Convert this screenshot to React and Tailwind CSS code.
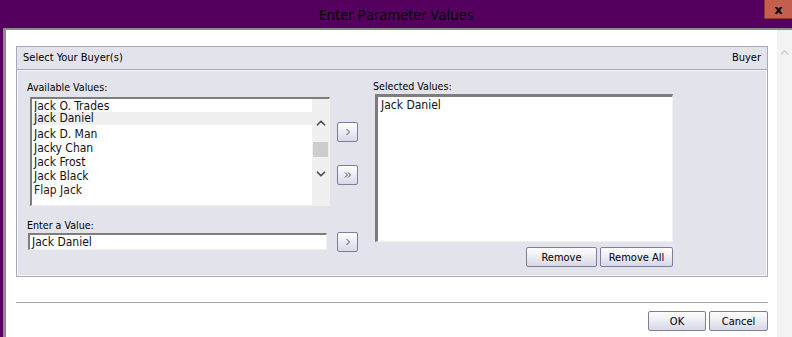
import {ChevronUp, ChevronDown} from "lucide-react";

const available = ["Jack O. Trades", "Jack Daniel", "Jack D. Man", "Jacky Chan", "Jack Frost", "Jack Black", "Flap Jack"];

function WinButton({ children, className = "" }) {
    return <button className={"flex items-center justify-center rounded-[2px] border border-[#7f7d9e] bg-gradient-to-b from-white to-[#d8d8e6] text-[11px] text-black leading-none " + className}>
        {children}
    </button>
}

function Arrow({ double }) {
    return <svg width="8" height="8" viewBox="0 0 8 8" fill="none" stroke="#4a4a66" strokeWidth="1">
        {double ? <>
            <path d="M1 1.5 L3.5 4 L1 6.5" />
            <path d="M4 1.5 L6.5 4 L4 6.5" />
        </> : <path d="M2.5 1 L5.5 4 L2.5 7" />}
    </svg>
}

// list row heights follow the uneven spacing in the original control
const rowClass = [
    "h-[11px] leading-[11px]",
    "h-[13px] leading-[13px] bg-[#efefef] mb-[2px]",
    "h-[14px] leading-[14px]",
    "h-[14px] leading-[14px]",
    "h-[14px] leading-[14px]",
    "h-[14px] leading-[14px]",
    "h-[14px] leading-[14px] text-[#3a1010]",
];

export default function App() {
    return <div className="w-[792px] h-[337px] overflow-hidden bg-[#55005e] flex flex-col" style={{fontFamily: '"DejaVu Sans Condensed", "DejaVu Sans", sans-serif'}}>
        {/* title bar */}
        <div className="h-[28px] shrink-0 relative flex items-center justify-center">
            <span className="text-[14px] text-black" style={{fontFamily: '"Noto Sans", sans-serif'}}>Enter Parameter Values</span>
            <div className="absolute right-0 top-0 w-[28px] h-[19px] bg-[#c45f50] border border-[#8a3a30] border-t-0 border-r-0 flex items-center justify-center">
                <span className="text-[13px] font-bold text-black leading-none" style={{fontFamily: '"DejaVu Sans", sans-serif'}}>x</span>
            </div>
        </div>

        <div className="flex-1 flex min-h-0">
            <div className="w-[3px] shrink-0" />
            <div className="flex-1 flex bg-white border-l-[3px] border-t-[2px] border-[#8c8c8c] min-w-0">
                <div className="flex-1 flex flex-col pl-[10px] pr-[9px] pt-[16px]">
                    {/* parameter panel */}
                    <div className="border border-[#a9a7c2] bg-[#e3e3ec] flex flex-col">
                        <div className="h-[23px] flex items-center justify-between px-[6px] border-b border-[#a9a7c2] text-[11px] text-black">
                            <span>Select Your Buyer(s)</span>
                            <span>Buyer</span>
                        </div>
                        <div className="flex pl-[9px] pt-[8px] pb-[8px] border border-[#f4f4f8]">
                            {/* available column */}
                            <div className="flex flex-col w-[303px]">
                                <div className="text-[10.6px] text-black h-[16px] leading-[16px]">Available Values:</div>
                                <div className="mt-[2px] ml-[3px] w-[300px] h-[109px] bg-white border-t-2 border-l-2 border-[#7d7d7d] border-r border-b border-r-[#f0f0f0] border-b-[#f0f0f0] flex">
                                    <div className="flex-1 flex flex-col pt-[2px] text-[12px] text-[#111]">
                                        {available.map((name, i) => (
                                            <div key={name} className={"pl-[2px] " + rowClass[i]}>{name}</div>
                                        ))}
                                    </div>
                                    <div className="w-[17px] bg-[#f0f0f0] flex flex-col items-center">
                                        <ChevronUp size={14} strokeWidth={3} color="#505050" className="mt-[17px]" />
                                        <div className="w-[15px] h-[15px] bg-[#cdcdcd] mt-[12px]" />
                                        <ChevronDown size={14} strokeWidth={3} color="#505050" className="mt-[10px]" />
                                    </div>
                                </div>
                                <div className="text-[10.6px] text-black mt-[11px] h-[16px] leading-[16px]">Enter a Value:</div>
                                <div className="ml-[1px] h-[17px] w-[299px] bg-white border-t-2 border-l-2 border-[#7d7d7d] border-r border-b border-r-[#f0f0f0] border-b-[#f0f0f0] text-[12px] leading-[14px] pl-[2px] text-[#111]">Jack Daniel</div>
                            </div>
                            {/* move buttons */}
                            <div className="w-[43px] flex flex-col items-start">
                                <WinButton className="w-[21px] h-[20px] ml-[7px] mt-[43px]"><Arrow /></WinButton>
                                <WinButton className="w-[21px] h-[20px] ml-[7px] mt-[23px]"><Arrow double /></WinButton>
                                <WinButton className="w-[21px] h-[20px] ml-[7px] mt-[47px]"><Arrow /></WinButton>
                            </div>
                            {/* selected column */}
                            <div className="flex flex-col w-[300px]">
                                <div className="text-[10.6px] text-black h-[15px] leading-[15px]">Selected Values:</div>
                                <div className="ml-[2px] h-[148px] bg-white border-t-[3px] border-l-[3px] border-[#7d7d7d] border-r border-b border-r-[#f0f0f0] border-b-[#f0f0f0] text-[12px] leading-[14px] text-[#111] pl-[3px] pt-[1px]">Jack Daniel</div>
                                <div className="flex justify-end gap-[3px] mt-[5px]">
                                    <WinButton className="w-[71px] h-[20px]">Remove</WinButton>
                                    <WinButton className="w-[73px] h-[20px]">Remove All</WinButton>
                                </div>
                            </div>
                        </div>
                    </div>
                    <div className="mt-[25px] h-px bg-[#a6a5b3]" />
                    <div className="flex justify-end gap-[3px] mt-[8px]">
                        <WinButton className="w-[58px] h-[20px]">OK</WinButton>
                        <WinButton className="w-[59px] h-[20px]">Cancel</WinButton>
                    </div>
                </div>
                {/* page scrollbar */}
                <div className="w-[15px] shrink-0 bg-[#f3f3f3] flex flex-col items-center">
                    <ChevronUp size={13} strokeWidth={2.5} color="#c8c8c8" className="mt-[16px]" />
                </div>
            </div>
        </div>
    </div>
}
